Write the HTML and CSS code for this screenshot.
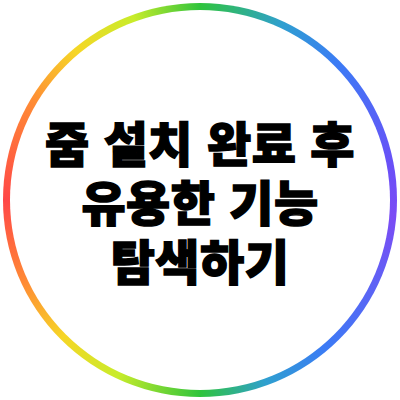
FILE: index.html
```html
<!DOCTYPE html>
<html lang="ko">
<head>
  <meta charset="UTF-8">
  <meta name="viewport" content="width=device-width, initial-scale=1.0">
  <title>줌 설치 완료 후 유용한 기능 탐색하기</title>
  <link rel="stylesheet" href="styles.css">
</head>
<body>
  <div class="frame">
    <div class="ring">
      <div class="disc">
        <h1 class="title">
          <span>줌 설치 완료 후</span>
          <span>유용한 기능</span>
          <span>탐색하기</span>
        </h1>
      </div>
    </div>
  </div>
</body>
</html>
```

FILE: styles.css
```css
body {
  margin: 0;
  background: #ffffff;
  font-family: "Noto Sans CJK KR", "Noto Sans", sans-serif;
}

.frame {
  width: 400px;
  height: 400px;
  display: flex;
  align-items: center;
  justify-content: center;
}

.ring {
  width: 394px;
  height: 394px;
  padding: 7px;
  box-sizing: border-box;
  border-radius: 50%;
  background: conic-gradient(
    #2fc43c 0deg,
    #2f9fd0 25deg,
    #3b7bf5 45deg,
    #6a4ff7 80deg,
    #7b4cf5 95deg,
    #3b7bf5 140deg,
    #2f9fd0 160deg,
    #2fc43c 180deg,
    #c8ec2a 205deg,
    #f6d626 225deg,
    #ff8a35 245deg,
    #ff4747 270deg,
    #ff8a35 300deg,
    #f6d626 320deg,
    #c8ec2a 340deg,
    #2fc43c 360deg
  );
}

.disc {
  width: 100%;
  height: 100%;
  border-radius: 50%;
  background: #ffffff;
  display: flex;
  align-items: center;
  justify-content: center;
}

.title {
  margin: 0;
  display: flex;
  flex-direction: column;
  align-items: center;
  font-size: 48px;
  font-weight: 900;
  line-height: 59px;
  color: #000000;
  -webkit-text-stroke: 1.4px #000000;
  letter-spacing: 0.5px;
}
```
